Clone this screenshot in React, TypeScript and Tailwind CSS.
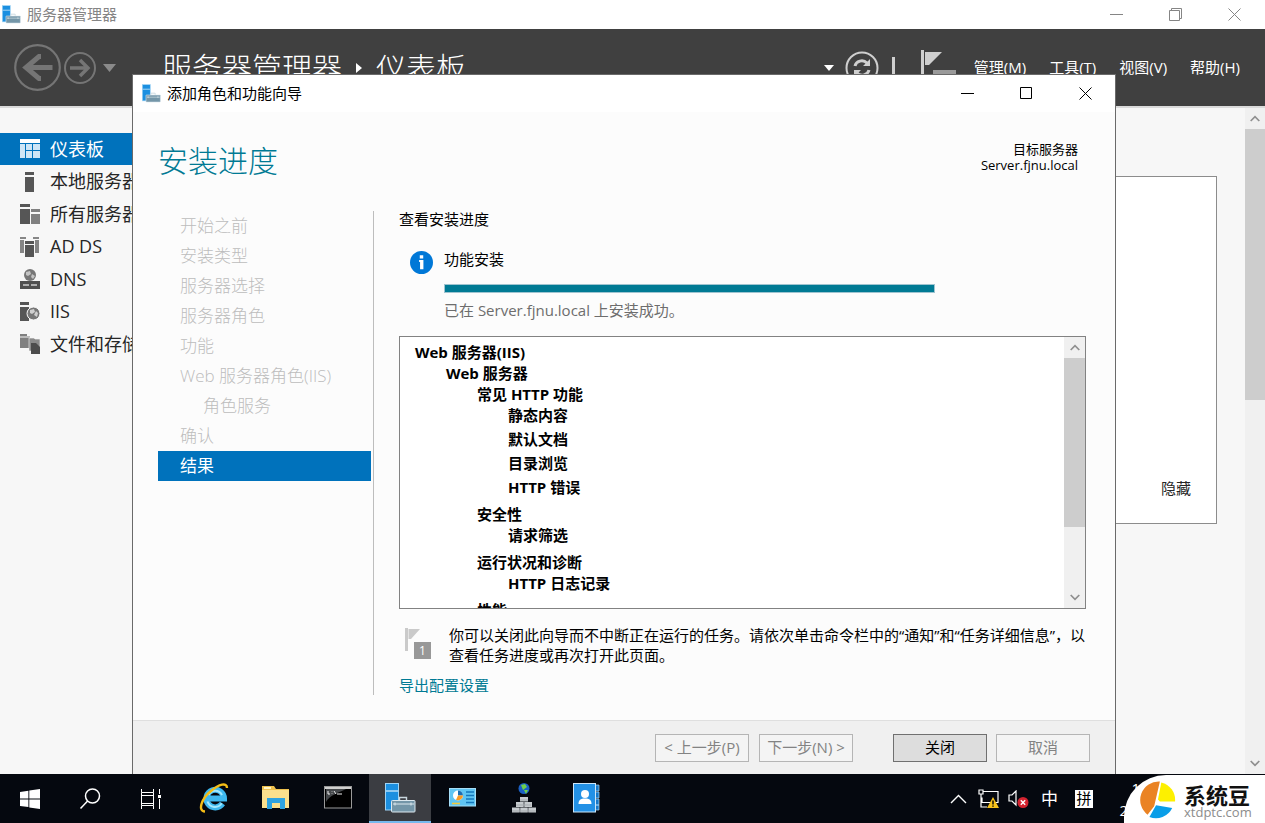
import React from "react";

// Shared server manager mark: blue tower with a toolbox in front
function ServerIcon({ className }: { className?: string }) {
  return (
    <svg viewBox="0 0 31 30" className={className} aria-hidden="true">
      <rect x="0.5" y="0.5" width="13" height="26.5" fill="#1b8fe0" stroke="#9fd4f5" />
      <path d="M1 8h12" stroke="#bfe3f8" strokeWidth="1.4" />
      <path d="M14.5 17v-2.5h7V17" fill="none" stroke="#c9d8df" strokeWidth="1.4" />
      <rect x="6.5" y="17.5" width="23.5" height="11.5" rx="0.8" fill="#7496a8" stroke="#dce8ee" />
      <path d="M8 21h21M10 19.5v3M26 19.5v3" stroke="#dce8ee" />
    </svg>
  );
}

function WindowControls({ maximized, className }: { maximized?: boolean; className: string }) {
  return (
    <div className={`flex self-stretch ${className}`}>
      <button aria-label="最小化" className="w-[59px] flex items-center justify-center">
        <svg width="13" height="13" stroke="currentColor"><path d="M0 6.5h13" /></svg>
      </button>
      <button aria-label={maximized ? "向下还原" : "最大化"} className="w-[59px] flex items-center justify-center">
        {maximized ? (
          <svg width="13" height="13" fill="none" stroke="currentColor">
            <path d="M0.5 2.5h10v10h-10zM2.5 2.5v-2h10v10h-2" />
          </svg>
        ) : (
          <svg width="13" height="13" fill="none" stroke="currentColor"><path d="M0.5 0.5h11v11h-11z" /></svg>
        )}
      </button>
      <button aria-label="关闭窗口" className="w-[59px] flex items-center justify-center">
        <svg width="13" height="13" fill="none" stroke="currentColor"><path d="M0.5 0.5l12 12M12.5 0.5l-12 12" /></svg>
      </button>
    </div>
  );
}

function ScrollButton({ down }: { down?: boolean }) {
  return (
    <button aria-label={down ? "向下滚动" : "向上滚动"} className="h-[21px] shrink-0 flex items-center justify-center text-[#8f8f8f]">
      <svg width="10" height="7" fill="none" stroke="currentColor" strokeWidth="1.7">
        <path d={down ? "M0.7 1l4.3 4.3L9.3 1" : "M0.7 6L5 1.7 9.3 6"} />
      </svg>
    </button>
  );
}

const sideItems = [
  {
    label: "仪表板",
    icon: (
      <g>
        <path d="M0 0h20v4H0z" fill="#fff" />
        <path d="M0 5h5v14H0zM6 5h6v6H6zM13 5h7v6h-7zM6 12h6v7H6zM13 12h7v7h-7z" fill="#cfe6f6" />
      </g>
    ),
  },
  { label: "本地服务器", icon: <path d="M5 0h9v3H5zM5 5h9v15H5z" fill="#565656" /> },
  {
    label: "所有服务器",
    icon: (
      <g>
        <path d="M0 0h10v3H0zM0 5h10v15H0z" fill="#565656" />
        <path d="M11 5h9v3h-9zM11 10h9v10h-9z" fill="#808080" />
      </g>
    ),
  },
  {
    label: "AD DS",
    icon: (
      <g>
        <path d="M0 0h6v2H0zM0 3h4v13H0zM19 0h-6v2h6zM19 3h-4v13h4z" fill="#868686" />
        <path d="M5 4h9v3H5zM5 8h9v12H5z" fill="#565656" />
      </g>
    ),
  },
  {
    label: "DNS",
    icon: (
      <g>
        <circle cx="10" cy="6" r="6" fill="#777" />
        <path d="M6 3l4-1 1 3-3 2-2-1zM12 5l3 2-2 3-2-2z" fill="#c4c4c4" />
        <path d="M0 12h20v8H0z" fill="#505050" />
        <path d="M3 16h6M11 16h6" stroke="#d0d0d0" strokeWidth="1.4" />
      </g>
    ),
  },
  {
    label: "IIS",
    icon: (
      <g>
        <path d="M0 0h9v3H0zM0 5h9v14H0z" fill="#565656" />
        <circle cx="13.500" cy="11.5" r="6.5" fill="#777" stroke="#f7f7f7" />
        <path d="M10 8l4-1 1 3-3 2-2-1zM16 9l2 2-1 4-3-2z" fill="#d0d0d0" />
      </g>
    ),
  },
  {
    label: "文件和存储服务",
    icon: (
      <g>
        <path d="M0 0h7v2h3v12H0z" fill="#808080" />
        <path d="M0 3h10" stroke="#f7f7f7" />
        <path d="M9 4h5l1 1h5v12H9z" fill="#8a8a8a" stroke="#f7f7f7" strokeWidth="0.6" />
        <path d="M11 9h5l4 4v7h-9z" fill="#4c4c4c" />
      </g>
    ),
  },
];

const steps = [
  { label: "开始之前" },
  { label: "安装类型" },
  { label: "服务器选择" },
  { label: "服务器角色" },
  { label: "功能" },
  { label: "Web 服务器角色(IIS)" },
  { label: "角色服务", nested: true },
  { label: "确认" },
  { label: "结果", active: true },
];

const featureGroups = [
  { name: "常见 HTTP 功能", items: ["静态内容", "默认文档", "目录浏览", "HTTP 错误"] },
  { name: "安全性", items: ["请求筛选"] },
  { name: "运行状况和诊断", items: ["HTTP 日志记录"] },
  { name: "性能", items: [] },
];

const menus = ["管理(M)", "工具(T)", "视图(V)", "帮助(H)"];

function MainHeader() {
  return (
    <header className="h-[77px] shrink-0 bg-[#404040] text-white flex items-center pl-[14px] pr-[25px]">
      <button aria-label="后退">
        <svg width="47" height="47" fill="none" stroke="#757575">
          <circle cx="23.5" cy="23.5" r="22.3" strokeWidth="2.2" />
          <path d="M38.5 23.5H12M27 12.5h-2L12 23.5l13 11h2" strokeWidth="5" />
        </svg>
      </button>
      <button aria-label="前进" className="ml-[3px]">
        <svg width="32" height="32" fill="none" stroke="#757575">
          <circle cx="16" cy="16" r="15" strokeWidth="2" />
          <path d="M6 16h18M16 8l8 8-8 8" strokeWidth="3.4" />
        </svg>
      </button>
      <button aria-label="历史记录" className="ml-[7px]">
        <svg width="13" height="8" fill="#8a8a8a"><path d="M0 0h13L6.500 8z" /></svg>
      </button>
      <h1 className="ml-[46px] flex items-center text-[30px] leading-[40px] font-light">
        服务器管理器
        <svg width="6" height="10" fill="#fff" className="mx-[14px]"><path d="M0 0l6 5-6 5z" /></svg>
        仪表板
      </h1>
      <div className="ml-auto flex items-center">
        <svg width="10" height="6" fill="#fff"><path d="M0 0h10L5 6z" /></svg>
        <button aria-label="刷新" className="ml-[11px]">
          <svg width="34" height="34" fill="none" stroke="#cfcfcf">
            <circle cx="17" cy="17" r="15.500" strokeWidth="2" />
            <path d="M10 15c1-5 8-7 12-3M24 19c-1 5-8 7-12 3" strokeWidth="3" />
            <path d="M25 8v7h-7zM9 26v-7h7z" fill="#cfcfcf" stroke="none" />
          </svg>
        </button>
        <span className="ml-[13px] w-[3px] h-[22px] bg-[#cfcfcf]" />
        <button aria-label="通知" className="ml-[26px]">
          <svg width="35" height="36" fill="#cfcfcf">
            <path d="M0 0h3v34H0zM4 2h17L8 15H4z" />
            <path d="M12 20h23v16H12z" fill="#9a9a9a" />
          </svg>
        </button>
        <nav className="ml-[18px] flex gap-[23px] pb-[2px] text-[15px] leading-[20px]">
          {menus.map((m) => (
            <button key={m}>{m}</button>
          ))}
        </nav>
      </div>
    </header>
  );
}

function Wizard() {
  return (
    <section className="absolute left-[132px] right-[149px] top-[74px] bottom-0 flex flex-col border border-b-0 border-[#6a6a6a] bg-[#fcfcfc] text-black">
      <div className="h-[37px] shrink-0 flex items-center pl-[9px] bg-white">
        <ServerIcon className="w-[19px] h-[19px]" />
        <span className="ml-[6px] pb-[2px] text-[15px] leading-[20px]">添加角色和功能向导</span>
        <WindowControls className="ml-auto" />
      </div>

      <div className="shrink-0 flex justify-between pl-[25px] pr-[37px] pt-[27px] pb-[28px]">
        <h2 className="text-[30px] leading-[44px] font-light text-[#007a94]">安装进度</h2>
        <div className="pt-[2px] text-right text-[13px] leading-[16px]">
          <p>目标服务器</p>
          <p>Server.fjnu.local</p>
        </div>
      </div>

      <div className="flex-1 min-h-0 flex pl-[25px] pr-[27px] pb-[25px]">
        <ol className="w-[216px] shrink-0 border-r border-[#bdbdbd] pr-[2px] text-[17px] leading-[30px] font-light text-[#bcbcbc]">
          {steps.map((s) => (
            <li
              key={s.label}
              className={s.active ? "bg-[#0072bc] text-white pl-[22px] font-normal" : s.nested ? "pl-[45px]" : "pl-[22px]"}
            >
              {s.label}
            </li>
          ))}
        </ol>

        <div className="flex-1 min-w-0 ml-[25px] flex flex-col text-[15px] leading-[20px]">
          <h3 className="-mt-[2px]">查看安装进度</h3>
          <div className="mt-[20px] ml-[11px] flex gap-[11px]">
            <svg width="23" height="23" viewBox="0 0 24 24" className="mt-[2px]">
              <circle cx="12" cy="12" r="12" fill="#0078d7" />
              <path d="M10.200 4.500h3.600v3.300h-3.600zM9.500 9.500h4.500v9.500h-3.500v-7.500h-1z" fill="#fff" />
            </svg>
            <div>
              <p>功能安装</p>
              <div role="progressbar" aria-label="功能安装" aria-valuenow={100} className="mt-[15px] w-[491px] h-[9px] bg-[#007a94] border border-[#9fc4d0]" />
              <p className="mt-[7px] text-[#6d6d6d]">已在 Server.fjnu.local 上安装成功。</p>
            </div>
          </div>

          <div className="mt-[16px] mr-[2px] flex-1 min-h-0 flex border border-[#828282] bg-white">
            <div className="flex-1 overflow-hidden pl-[15px] pt-[5px] font-bold leading-[21px]">
              <p>Web 服务器(IIS)</p>
              <div className="pl-[31px]">
                <p>Web 服务器</p>
                <ul className="pl-[31px] flex flex-col gap-[3px]">
                  {featureGroups.map((g) => (
                    <li key={g.name}>
                      {g.name}
                      <ul className="pl-[31px]">
                        {g.items.map((item) => (
                          <li key={item} className="pb-[3px]">{item}</li>
                        ))}
                      </ul>
                    </li>
                  ))}
                </ul>
              </div>
            </div>
            <div className="w-[21px] flex flex-col bg-[#f0f0f0]">
              <ScrollButton />
              <div className="h-[169px] bg-[#cdcdcd]" />
              <div className="flex-1" />
              <ScrollButton down />
            </div>
          </div>

          <div className="mt-[16px] flex">
            <svg width="27" height="32" viewBox="0 0 27 32" className="ml-[6px] mt-[3px] shrink-0">
              <path d="M0 0h3v23H0zM3.500 1H15L6 11H3.500z" fill="#cacaca" />
              <rect x="9" y="14" width="17" height="17" fill="#989898" />
              <text x="17.500" y="27" textAnchor="middle" fontSize="12" fill="#fff">1</text>
            </svg>
            <p className="ml-[17px]">
              你可以关闭此向导而不中断正在运行的任务。请依次单击命令栏中的“通知”和“任务详细信息”，以查看任务进度或再次打开此页面。
            </p>
          </div>
          <a href="#export" className="mt-[10px] self-start text-[#007a94]">导出配置设置</a>
        </div>
      </div>

      <footer className="shrink-0 flex justify-end pt-[13px] pb-[12px] pr-[25px] text-[15px] leading-[20px] bg-[#f0f0f0] border-t border-[#dfdfdf]">
        <button disabled className="w-[94px] h-[28px] pb-[2px] border border-[#b5b5b5] bg-[#f4f4f4] text-[#838383]">&lt; 上一步(P)</button>
        <button disabled className="ml-[10px] w-[94px] h-[28px] pb-[2px] border border-[#b5b5b5] bg-[#f4f4f4] text-[#838383]">下一步(N) &gt;</button>
        <button className="ml-[40px] w-[94px] h-[28px] pb-[2px] border border-[#707070] bg-[#dddddd]">关闭</button>
        <button disabled className="ml-[9px] w-[94px] h-[28px] pb-[2px] border border-[#b5b5b5] bg-[#f4f4f4] text-[#838383]">取消</button>
      </footer>
    </section>
  );
}

function TaskButton({ label, active, children }: { label: string; active?: boolean; children: React.ReactNode }) {
  return (
    <button
      aria-label={label}
      className={`w-[62px] flex items-center justify-center border-b-2 ${active ? "bg-[#3b3d42] border-[#76b9ed]" : "border-transparent"}`}
    >
      {children}
    </button>
  );
}

function Taskbar() {
  return (
    <footer className="relative h-[49px] shrink-0 flex bg-[#05080f] text-white">
      <button aria-label="开始" className="w-[60px] flex items-center justify-center">
        <svg width="20" height="20" fill="#fff">
          <path d="M0 3l8.400-1.200v7.700H0zM9.300 1.600L20 0v9.500H9.300zM0 10.400h8.400v7.700L0 17zM9.300 10.400H20V20L9.300 18.400z" />
        </svg>
      </button>
      <button aria-label="搜索" className="w-[60px] flex items-center justify-center">
        <svg width="22" height="22" fill="none" stroke="#fff" strokeWidth="1.500">
          <circle cx="13.500" cy="8" r="7" />
          <path d="M8.600 13L1.500 20.500" />
        </svg>
      </button>
      <button aria-label="任务视图" className="w-[63px] flex items-center justify-center">
        <svg width="21" height="20" fill="none" stroke="#fff">
          <path d="M0.500 0v3.500h12V0M0.500 3.500v13M12.500 3.500v13M0.500 6.500h12M0.500 14.500h12M0.500 20v-3.500h12V20M18.500 0v20" />
          <path d="M16.500 5.500h4v4h-4z" fill="#fff" stroke="#05080f" />
        </svg>
      </button>
      <TaskButton label="Internet Explorer">
        <svg width="30" height="30" viewBox="0 0 30 30" fill="none">
          <path d="M23.500 20.500A8.800 8.800 0 1 1 25 15.500H9" stroke="#3fb8ee" strokeWidth="6" />
          <path d="M22.800 20.300A8 8 0 0 1 8.500 18.500M9.500 12A7.500 7.500 0 0 1 23 12" stroke="#a3e8fd" strokeWidth="2" />
          <path d="M6 28.500C-2 28 3 15 12 8 20 1 28-1 28 5" stroke="#f5bd16" strokeWidth="2.400" />
        </svg>
      </TaskButton>
      <TaskButton label="文件资源管理器">
        <svg width="28" height="26" viewBox="0 0 28 26">
          <path d="M0 1h12l2 3h13v19H0z" fill="#eec14e" />
          <path d="M2 2h7v2H2z" fill="#fff3c4" />
          <path d="M0 5h27v18H0z" fill="#fbe08d" />
          <path d="M5 13h18v11h-5v-6h-8v6H5z" fill="#2fa3e0" />
        </svg>
      </TaskButton>
      <TaskButton label="命令提示符">
        <svg width="28" height="23" viewBox="0 0 28 23">
          <rect x="0.500" y="0.500" width="27" height="21.500" fill="#000" stroke="#9a9a9a" />
          <path d="M1 1h26v2H1z" fill="#cfcfcf" />
          <path d="M2 3h20C14 7 6 9 2 16z" fill="#44474a" />
          <path d="M4 5v3h2M8 5.500v.5M8 7.500v.5M10 5l2 3M13 8h5" stroke="#eee" fill="none" />
        </svg>
      </TaskButton>
      <TaskButton label="服务器管理器" active>
        <ServerIcon className="w-[31px] h-[30px]" />
      </TaskButton>
      <TaskButton label="控制面板">
        <svg width="27" height="19" viewBox="0 0 27 19">
          <rect x="0.500" y="0.500" width="26" height="17.500" fill="#5fc5f3" stroke="#a6def8" />
          <circle cx="9" cy="7.500" r="5" fill="#fff" />
          <path d="M9 7.500V2.500a5 5 0 0 1 5 5z" fill="#1b6fb5" />
          <path d="M9 7.500h5a5 5 0 0 1-7 4.500z" fill="#f59a23" />
          <path d="M17 4h8M17 7.500h8M17 11h8M17 14.500h8" stroke="#1477bd" strokeWidth="1.300" />
          <path d="M3 15.500h8" stroke="#f5c93c" strokeWidth="1.600" />
        </svg>
      </TaskButton>
      <TaskButton label="IIS 管理器">
        <svg width="24" height="30" viewBox="0 0 24 30">
          <circle cx="12" cy="5.500" r="5.500" fill="#1b60c4" />
          <path d="M9 2l4-1 2 3-4 3zM12 7l4 0-2 4z" fill="#6fd04c" />
          <path d="M8 14h8v4.500H8zM4 19h7.700v5H4zM12.300 19H20v5h-7.700zM0 24.500h7.700v5H0zM8.200 24.500h7.600v5H8.200zM16.300 24.500H24v5h-7.700z" fill="#c6cace" />
          <path d="M8 17h8M4 22h15M0 28h24" stroke="#a5aaae" />
        </svg>
      </TaskButton>
      <TaskButton label="通讯录">
        <svg width="27" height="30" viewBox="0 0 27 30">
          <path d="M22 2h4v6h-4zM22 9h4v6h-4zM22 16h4v6h-4zM22 22h4v5h-4z" fill="#1678c8" stroke="#a9d6f5" strokeWidth="0.700" />
          <rect x="0.500" y="0.500" width="22" height="28.500" fill="#2391e6" stroke="#cce6fa" />
          <circle cx="12" cy="11" r="4" fill="#fff" />
          <path d="M5.500 21c0-4 2-5.500 6.500-5.500s6.500 1.500 6.500 5.500z" fill="#fff" />
        </svg>
      </TaskButton>

      <div className="ml-auto mr-[172px] flex items-center">
        <button aria-label="显示隐藏的图标">
          <svg width="17" height="10" fill="none" stroke="#fff" strokeWidth="1.400"><path d="M1 9l7.500-7.500L16 9" /></svg>
        </button>
        <svg width="22" height="20" viewBox="0 0 22 20" fill="none" className="ml-[11px]">
          <path d="M5 2.500h15v11H4v-5M1 1h4v4H1zM3 5v13h6" stroke="#fff" strokeWidth="1.200" />
          <path d="M15 8l6 11H9z" fill="#f8c21c" />
          <path d="M15 11.500v4M15 16.500v1.300" stroke="#000" strokeWidth="1.400" />
        </svg>
        <svg width="21" height="18" viewBox="0 0 21 18" fill="none" className="ml-[8px]">
          <path d="M1 5h3l4-4v14l-4-4H1z" stroke="#fff" strokeWidth="1.200" />
          <circle cx="15" cy="12.500" r="5.500" fill="#d4232f" />
          <path d="M12.800 10.300l4.400 4.400M17.200 10.300l-4.400 4.400" stroke="#fff" strokeWidth="1.400" />
        </svg>
        <span className="ml-[12px] text-[17px] leading-[20px]">中</span>
        <span className="ml-[17px] w-[18px] h-[18px] bg-white text-black text-[15px] leading-[17px] text-center">拼</span>
      </div>

      {/* Clock, mostly behind the site badge */}
      <div className="absolute right-[125px] top-[3px] text-[15px] leading-[22px] text-right">
        <p>1</p>
        <p className="mr-[12px]">2</p>
      </div>
      <div className="absolute right-0 bottom-0 w-[141px] h-[48px] flex items-center pl-[15px] bg-white text-[#111] rounded-tl-[42px]">
        <svg width="37" height="39" viewBox="0 0 39 40" className="shrink-0">
          <path d="M22 1A19.500 19.500 0 0 0 9 36L16 27z" fill="#ea8324" />
          <path d="M23.500 2A19 19 0 0 1 38 22H22L20 20z" fill="#fdf000" />
          <path d="M35 29A19 19 0 0 1 11 38.500L18 26z" fill="#0a9ee8" />
        </svg>
        <div className="ml-[8px] pt-[4px]">
          <p className="text-[22px] leading-[22px] font-bold">系统豆</p>
          <p className="text-[13px] leading-[12px] text-[#8c8c8c]">xtdptc.com</p>
        </div>
      </div>
    </footer>
  );
}

export default function App() {
  return (
    <div className="h-screen flex flex-col overflow-hidden bg-[#f7f7f7] font-['Open_Sans','Noto_Sans_CJK_SC',sans-serif]">
      <div className="relative flex-1 min-h-0 flex flex-col">
        <div className="h-[29px] shrink-0 flex items-center pl-[2px] bg-white text-[#858585]">
          <ServerIcon className="w-[19px] h-[19px]" />
          <span className="ml-[6px] pb-[2px] text-[15px] leading-[20px]">服务器管理器</span>
          <WindowControls maximized className="ml-auto pr-[1px]" />
        </div>
        <MainHeader />

        <div className="flex-1 min-h-0 flex border-t-2 border-[#dadada]">
          <nav className="w-[200px] shrink-0 pt-[25px]">
            <ul className="text-[18px] text-[#262626]">
              {sideItems.map((item, i) => (
                <li key={item.label} className="odd:h-8 even:h-[33px]">
                  <a
                    href="#view"
                    className={`h-full flex items-center gap-[10px] pl-[20px] ${i === 0 ? "bg-[#0072bc] text-white" : ""}`}
                  >
                    <svg width="20" height="20" className="shrink-0">{item.icon}</svg>
                    <span className="whitespace-nowrap">{item.label}</span>
                  </a>
                </li>
              ))}
            </ul>
          </nav>
          <main className="flex-1 pt-[68px] pr-[28px]">
            <div className="h-[348px] flex items-end justify-end border border-[#8c8c8c] bg-white pr-[25px] pb-[25px]">
              <button className="text-[15px] leading-[20px] text-[#262626]">隐藏</button>
            </div>
          </main>
          <div className="w-[20px] flex flex-col bg-[#f0f0f0]">
            <ScrollButton />
            <div className="h-[271px] bg-[#cdcdcd]" />
            <div className="flex-1" />
            <ScrollButton down />
          </div>
        </div>

        <Wizard />
      </div>
      <Taskbar />
    </div>
  );
}
